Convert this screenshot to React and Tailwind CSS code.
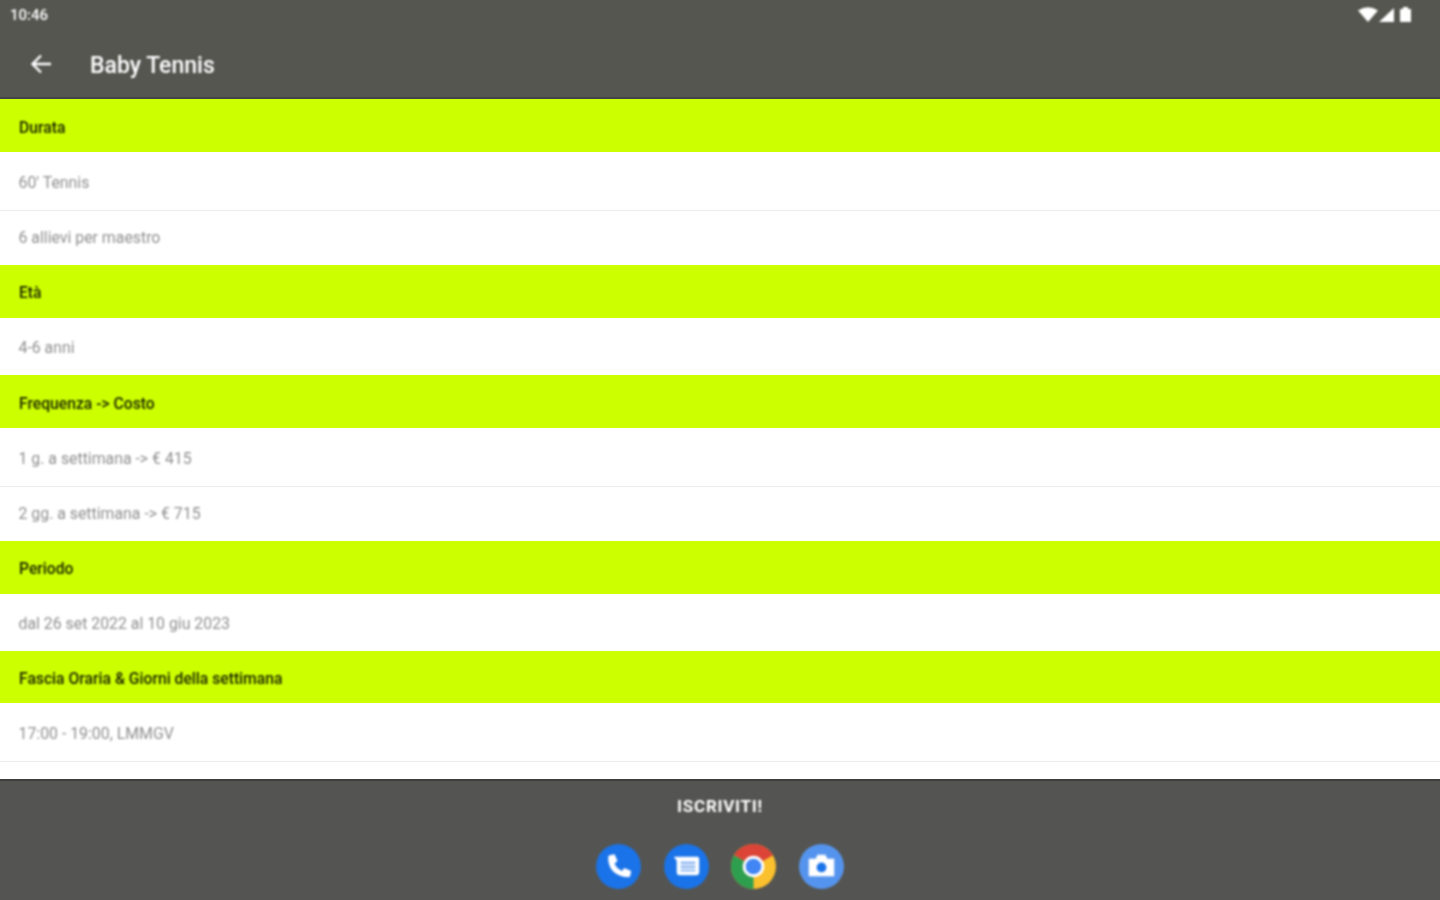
const rows = [
  { t: "h", x: "Durata", h: "h-[53px] pt-[4px]" },
  { t: "r", x: "60' Tennis", h: "h-[59px] pt-[3px]" },
  { t: "r", x: "6 allievi per maestro", h: "h-[54px]", last: true },
  { t: "h", x: "Età", h: "h-[53px] pt-[3px]" },
  { t: "r", x: "4-6 anni", h: "h-[57px] pt-[3px]", last: true },
  { t: "h", x: "Frequenza -> Costo", h: "h-[53px] pt-[4px]" },
  { t: "r", x: "1 g. a settimana -> € 415", h: "h-[59px] pt-[3px]" },
  { t: "r", x: "2 gg. a settimana -> € 715", h: "h-[54px]", last: true },
  { t: "h", x: "Periodo", h: "h-[53px] pt-[3px]" },
  { t: "r", x: "dal 26 set 2022 al 10 giu 2023", h: "h-[57px] pt-[3px]", last: true },
  { t: "h", x: "Fascia Oraria & Giorni della settimana", h: "h-[52px] pt-[3px]" },
  { t: "r", x: "17:00 - 19:00, LMMGV", h: "h-[59px] pt-[3px]" },
];

function Row({ r }) {
  if (r.t === "h") {
    return (
      <div className={`${r.h} bg-[#ccff00] flex items-center pl-[19px]`}>
        <span className="text-[15.7px] font-medium text-[#1a2200] [filter:blur(0.8px)]">{r.x}</span>
      </div>
    );
  }
  return (
    <div className={`${r.h} bg-white flex items-center pl-[18.5px] ${r.last ? "" : "border-b border-[#ececec]"}`}>
      <span className="text-[15.85px] text-[#8f8f8f] [filter:blur(0.8px)]">{r.x}</span>
    </div>
  );
}

export default function App() {
  return (
    <div className="w-[1440px] h-[900px] overflow-hidden flex flex-col bg-white font-['Roboto',sans-serif]">
      <header className="h-[99px] shrink-0 bg-[#54564f] border-b-2 border-[#45434a] text-white">
        <div className="h-[29px] flex items-center justify-between pl-[10px] pr-[29px]">
          <span className="mt-[1px] text-[15px] font-medium [filter:blur(0.8px)]">10:46</span>
          <div className="flex items-center gap-[1px] [filter:blur(0.8px)]">
            <svg width="20" height="15" viewBox="0 0 20 15"><path d="M0 3.500 Q10 -3 20 3.500 L10 15Z" fill="#fff" /></svg>
            <svg width="15" height="14" viewBox="0 0 15 14"><path d="M15 0V14H0Z" fill="#fff" /></svg>
            <svg width="11" height="15" viewBox="0 0 11 15" className="ml-[5px]"><path d="M3 0H8V2H11V15H0V2H3Z" fill="#fff" /></svg>
          </div>
        </div>
        <div className="h-[68px] flex items-center">
          <svg width="22" height="22" viewBox="0 0 22 22" className="ml-[30px] mt-[2px] [filter:blur(0.8px)]" fill="none" stroke="#fff" strokeWidth="2.4">
            <path d="M21 11H3M11 2.5L2.5 11L11 19.5" />
          </svg>
          <span className="ml-[38px] mt-[4px] text-[23px] font-medium [filter:blur(0.8px)] leading-none">Baby Tennis</span>
        </div>
      </header>
      <main className="flex-1 min-h-0 overflow-hidden">
        {rows.map((r, i) => <Row key={i} r={r} />)}
      </main>
      <footer className="h-[121px] shrink-0 bg-[#545552] border-t-2 border-[#3c3f3a] flex flex-col items-center">
        <span className="mt-[15px] text-[17px] font-bold tracking-[0.75px] text-white leading-[20px] [filter:blur(0.8px)]">ISCRIVITI!</span>
        <div className="mt-[28px] flex items-center gap-[22.5px] [filter:blur(0.8px)]">
          <svg width="45" height="45" viewBox="0 0 46 46">
            <circle cx="23" cy="23" r="23" fill="#1a73e8" />
            <path d="M14 11.5l5-1 3 7-3 2.500c1.500 3.500 4 6 7.500 7.500l2.500-3 7 3-1 5c-.3 1-1 1.500-2 1.500C20 33.500 12 25.500 12.500 13.500c0-1 .6-1.700 1.500-2z" fill="#fff" />
          </svg>
          <svg width="45" height="45" viewBox="0 0 46 46">
            <circle cx="23" cy="23" r="23" fill="#1a73e8" />
            <path d="M10 13H34a2 2 0 0 1 2 2V29a3 3 0 0 1-3 3H16a3 3 0 0 1-3-3V17Z" fill="#fff" />
            <rect x="17" y="18" width="15" height="2.500" fill="#8ab4f0" />
            <rect x="17" y="22" width="15" height="2.500" fill="#8ab4f0" />
            <rect x="17" y="26" width="15" height="2" fill="#8ab4f0" />
          </svg>
          <svg width="45" height="45" viewBox="0 0 46 46">
            <circle cx="23" cy="23" r="23" fill="#fbc02d" />
            <path d="M23 23 L3.100 11.500 A23 23 0 0 1 42.900 11.500 Z" fill="#db4437" />
            <path d="M23 23 L3.100 11.500 A23 23 0 0 0 23 46 Z" fill="#2e9e4f" />
            <circle cx="23" cy="23" r="11" fill="#fff" />
            <circle cx="23" cy="23" r="8" fill="#4285f4" />
          </svg>
          <svg width="45" height="45" viewBox="0 0 46 46">
            <circle cx="23" cy="23" r="23" fill="#5594ee" />
            <path d="M10 15H17L19 11H27L29 15H36V33H10Z" fill="#fff" />
            <circle cx="23" cy="24" r="5" fill="#1a73e8" />
          </svg>
        </div>
      </footer>
    </div>
  );
}
